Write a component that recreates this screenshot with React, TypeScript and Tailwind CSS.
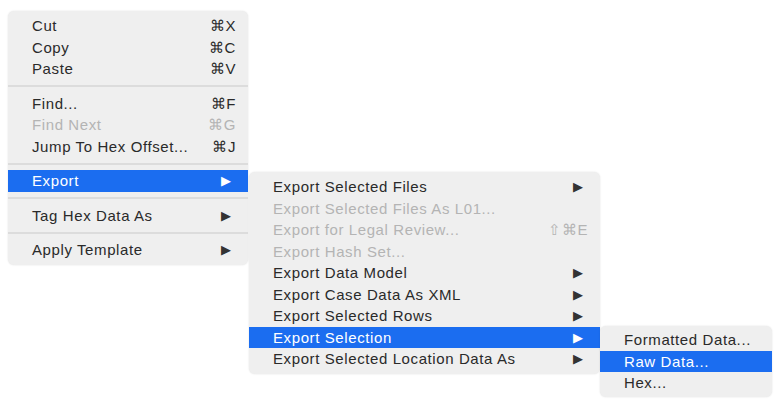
import React from "react";

type Item =
  | { sep: true }
  | { label: string; sc?: string; sub?: boolean; dis?: boolean; hi?: boolean };

function Menu({ items, className }: { items: Item[]; className: string }) {
  return (
    <div
      className={
        "absolute rounded-[6px] bg-[#efefef] py-[4px] shadow-[0_0_2px_rgba(0,0,0,0.12)] " +
        className
      }
    >
      {items.map((it, i) =>
        "sep" in it ? (
          <div key={i} className="flex h-[13px] items-center">
            <div className="h-[2px] w-full bg-[#dcdcdc]" />
          </div>
        ) : (
          <div
            key={i}
            className={
              "flex h-[21.5px] items-center pl-[24px] pr-[12px] text-[15px] tracking-[0.6px] leading-none " +
              (it.hi
                ? "bg-[#1b6df0] text-white"
                : it.dis
                ? "text-[#b4b4b4]"
                : "text-[#2a2a2a]")
            }
          >
            <span className="flex-1 whitespace-nowrap">{it.label}</span>
            {it.sc && <span className="ml-4 whitespace-nowrap">{it.sc}</span>}
            {it.sub && (
              <span className={"mr-[4px] text-[13px] " + (it.hi ? "text-white" : "text-[#333]")}>▶</span>
            )}
          </div>
        )
      )}
    </div>
  );
}

export default function App() {
  return (
    <div
      className="relative h-[408px] w-[781px] overflow-hidden bg-white"
      style={{ fontFamily: '"Liberation Sans", Arial, sans-serif' }}
    >
      <Menu
        className="left-[8px] top-[11px] w-[240px]"
        items={[
          { label: "Cut", sc: "⌘X" },
          { label: "Copy", sc: "⌘C" },
          { label: "Paste", sc: "⌘V" },
          { sep: true },
          { label: "Find...", sc: "⌘F" },
          { label: "Find Next", sc: "⌘G", dis: true },
          { label: "Jump To Hex Offset...", sc: "⌘J" },
          { sep: true },
          { label: "Export", sub: true, hi: true },
          { sep: true },
          { label: "Tag Hex Data As", sub: true },
          { sep: true },
          { label: "Apply Template", sub: true },
        ]}
      />
      <Menu
        className="left-[249px] top-[172px] w-[351px]"
        items={[
          { label: "Export Selected Files", sub: true },
          { label: "Export Selected Files As L01...", dis: true },
          { label: "Export for Legal Review...", sc: "⇧⌘E", dis: true },
          { label: "Export Hash Set...", dis: true },
          { label: "Export Data Model", sub: true },
          { label: "Export Case Data As XML", sub: true },
          { label: "Export Selected Rows", sub: true },
          { label: "Export Selection", sub: true, hi: true },
          { label: "Export Selected Location Data As", sub: true },
        ]}
      />
      <Menu
        className="left-[600px] top-[326px] w-[172px] !py-[3px]"
        items={[
          { label: "Formatted Data..." },
          { label: "Raw Data...", hi: true },
          { label: "Hex..." },
        ]}
      />
    </div>
  );
}
